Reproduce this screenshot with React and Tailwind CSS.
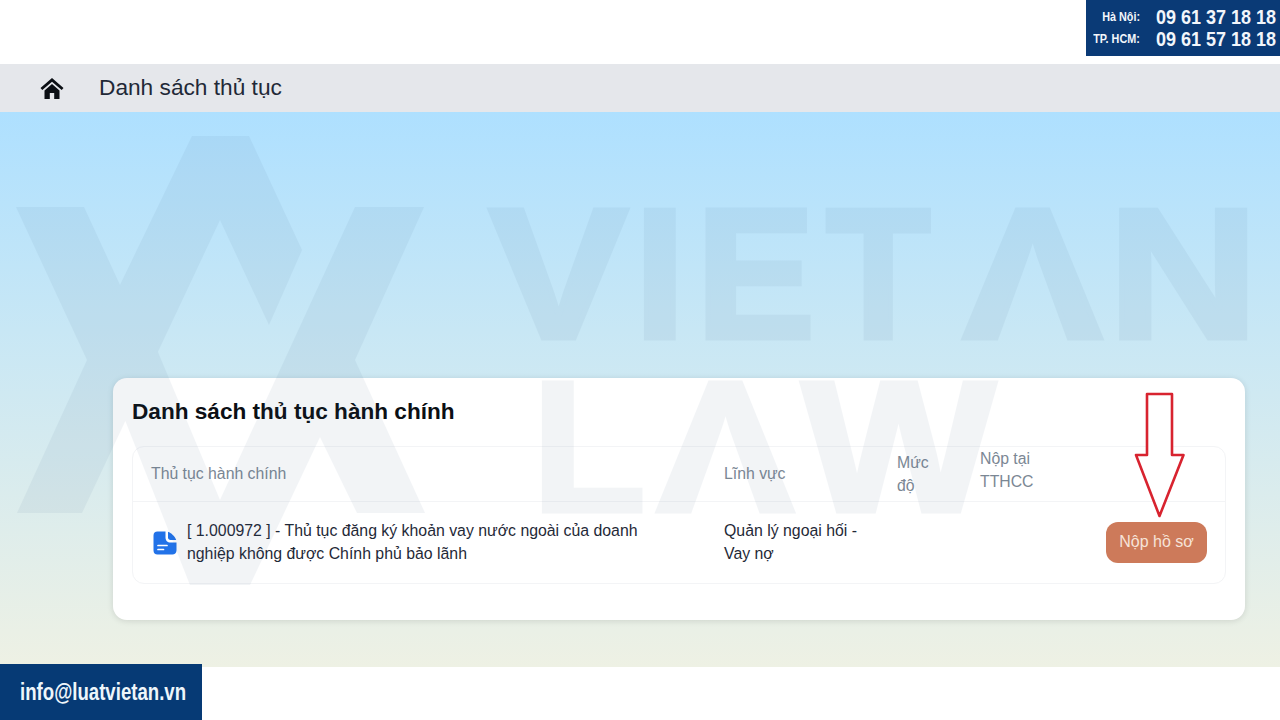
import React from "react";

const headerCell = "text-[15.8px] leading-[23px] text-[#7b8794]";

const HomeIcon = () => (
  <svg width="24" height="21" viewBox="0 0 24 21" className="shrink-0">
    <path d="M12 0L0.5 10L2.3 12L12 3.7L21.7 12L23.5 10Z" fill="#0b0f14" />
    <path d="M4.5 12.5L12 6L19.5 12.5V21H14.2V15H9.8V21H4.5Z" fill="#0b0f14" />
  </svg>
);

const FileIcon = () => (
  <svg width="24" height="24" viewBox="0 0 24 24" className="shrink-0">
    <path
      d="M4.5 0.5H12.5V6.5C12.5 9.5 14.5 11.5 17.5 11.5H23.5V19.5C23.5 22 21.5 23.5 19.5 23.5H4.5C2 23.5 0.5 22 0.5 19.5V4.5C0.5 2 2 0.5 4.5 0.5Z"
      fill="#2272e8"
    />
    <path d="M15 0.8C18 1.8 22 5.5 23.2 9H17.5C16 9 15 8 15 6.5Z" fill="#2272e8" />
    <path d="M5 14.5H14M5 18.5H10.5" stroke="#fff" strokeWidth="1.7" strokeLinecap="round" />
  </svg>
);

const Watermark = () => (
  <svg
    width="1280"
    height="720"
    viewBox="0 0 1280 720"
    className="absolute inset-0 pointer-events-none opacity-[0.062]"
  >
    <path
      fill="#3f5f86"
      d="M16 207H84L120 285L192 136H249L302 250L269 325L220 220L82 513H17L87 360ZM355 207H424L355 360L425 513H357L320 437L250 585H190L125 420L155 345L220 500Z"
    />
    <g
      fill="#3f5f86"
      stroke="#3f5f86"
      strokeWidth="5"
      className="font-['Liberation_Sans'] font-bold"
      fontSize="186"
    >
      <text x="489" y="338" transform="translate(489 0) scale(1.12 1) translate(-489 0)">V</text>
      <text x="634" y="338">I</text>
      <text x="696" y="338" transform="translate(696 0) scale(0.96 1) translate(-696 0)">E</text>
      <text x="826" y="338" transform="translate(826 0) scale(0.92 1) translate(-826 0)">T</text>
      <text x="963" y="338" transform="translate(963 0) scale(1.12 1) translate(-963 0)">Λ</text>
      <text x="1108" y="338" transform="translate(1108 0) scale(1.12 1) translate(-1108 0)">N</text>
      <text x="532" y="511">L</text>
      <text x="657" y="511" transform="translate(657 0) scale(1.1 1) translate(-657 0)">Λ</text>
      <text x="802" y="511" transform="translate(802 0) scale(1.1 1) translate(-802 0)">W</text>
    </g>
  </svg>
);

const PhoneRow = ({ label, phone }) => (
  <div className="flex items-center h-[22px]">
    <div className="w-[54px] flex justify-end">
      <span className="inline-block whitespace-nowrap text-[12px] origin-right scale-x-[0.9]">{label}</span>
    </div>
    <div className="w-[120px] ml-4 h-[22px] leading-[22px]">
      <span className="inline-block whitespace-nowrap text-[21px] origin-left scale-x-[0.857]">{phone}</span>
    </div>
  </div>
);

const App = () => {
  return (
    <div className="relative w-[1280px] h-[720px] overflow-hidden bg-white flex flex-col font-['Liberation_Sans',sans-serif]">
      {/* Top bar with phone numbers */}
      <div className="h-16 shrink-0 flex justify-end items-start">
        <div className="w-[194px] h-14 bg-[#0a3a76] text-[#f2f6fb] font-bold pt-[6px] overflow-hidden">
          <PhoneRow label="Hà Nội:" phone="09 61 37 18 18" />
          <PhoneRow label="TP. HCM:" phone="09 61 57 18 18" />
        </div>
      </div>

      {/* Nav */}
      <div className="h-12 shrink-0 bg-[#e5e7eb] flex items-center pl-10">
        <HomeIcon />
        <span className="ml-[35px] -mt-[2px] text-[22.7px] text-[#1f2937]">Danh sách thủ tục</span>
      </div>

      {/* Main */}
      <div className="h-[555px] shrink-0 bg-gradient-to-b from-[#aee0ff] to-[#eef1e4] pt-[266px] pl-[113px]">
        <div className="relative w-[1132px] h-[242px] bg-white rounded-[14px] shadow-[0_1px_6px_rgba(0,0,0,0.12)] px-[19px] pt-5">
          <h1 className="text-[22.6px] leading-[28px] font-bold text-[#0b0f14]">Danh sách thủ tục hành chính</h1>

          <div className="mt-5 w-[1094px] h-[138px] rounded-xl border border-[#f3f4f6]">
            <div className="grid grid-cols-[572px_173px_83px_auto] h-[55px] items-center border-b border-[#f3f4f6]">
              <div className={`pl-[18px] pb-1 ${headerCell}`}>Thủ tục hành chính</div>
              <div className={`pl-[19px] pb-1 ${headerCell}`}>Lĩnh vực</div>
              <div className={`pl-[19px] pb-[3px] w-[60px] ${headerCell}`}>Mức độ</div>
              <div className={`pl-[19px] pb-[11px] w-[90px] ${headerCell}`}>Nộp tại TTHCC</div>
            </div>
            <div className="grid grid-cols-[572px_173px_auto] h-[82px] items-center">
              <div className="flex items-center pl-5 gap-[10px] text-[15.85px] leading-[23px] text-[#1f2937]">
                <FileIcon />
                <span className="w-[470px] -mt-[2px]">
                  [ 1.000972 ] - Thủ tục đăng ký khoản vay nước ngoài của doanh nghiệp không được Chính phủ bảo lãnh
                </span>
              </div>
              <div className="pl-[19px] w-[160px] -mt-[2px] text-[15.85px] leading-[23px] text-[#1f2937]">
                Quản lý ngoại hối - Vay nợ
              </div>
              <div className="flex justify-end pr-[18px] -mt-[2px]">
                <button className="w-[101px] h-[41px] rounded-xl bg-[#cd7a5a] text-[16px] text-[#f6e3d8]">Nộp hồ sơ</button>
              </div>
            </div>
          </div>

          {/* Red arrow */}
          <svg width="54" height="128" viewBox="0 0 54 128" className="absolute left-[1020px] top-[14px]">
            <path
              d="M14 2H39V63H50.5L26.5 124L3 63H14Z"
              fill="#fff"
              stroke="#d8232f"
              strokeWidth="2.6"
              strokeLinejoin="round"
            />
          </svg>
        </div>
      </div>

      {/* Footer */}
      <div className="-mt-[3px] relative">
        <div className="w-[202px] h-14 bg-[#063a75] flex items-center justify-center text-[#eef6fb] font-bold text-[24px] pl-[4px]">
          <span className="inline-block whitespace-nowrap scale-x-[0.775]">info@luatvietan.vn</span>
        </div>
      </div>

      <Watermark />
    </div>
  );
};

export default App;
